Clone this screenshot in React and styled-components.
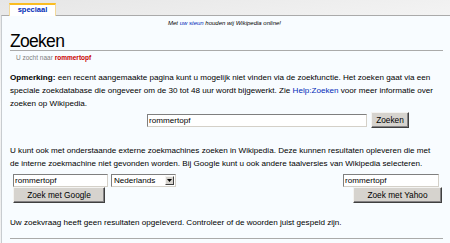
import styled, { createGlobalStyle } from 'styled-components';

const GlobalStyle = createGlobalStyle`
  html, body {
    margin: 0;
    padding: 0;
    width: 450px;
    height: 243px;
    overflow: hidden;
    background: #f2f2f2;
  }
  body {
    font-family: "Liberation Sans", Arial, sans-serif;
  }
`;

export default function App() {
  return (
    <>
      <GlobalStyle />
      <Page>
        <TopBar>
          <Tab>speciaal</Tab>
        </TopBar>
        <Content>
          <SiteNotice>
            Met <Link>uw steun</Link> houden wij Wikipedia online!
          </SiteNotice>
          <Heading>Zoeken</Heading>
          <SubTitle>
            U zocht naar <Query>rommertopf</Query>
          </SubTitle>
          <Paragraph>
            <b>Opmerking:</b> een recent aangemaakte pagina kunt u mogelijk niet vinden via de zoekfunctie. Het zoeken gaat via een
            <br />
            speciale zoekdatabase die ongeveer om de 30 tot 48 uur wordt bijgewerkt. Zie <Link>Help:Zoeken</Link> voor meer informatie over
            <br />
            zoeken op Wikipedia.
          </Paragraph>
          <SearchRow>
            <TextInput $width={220} $top={2} defaultValue="rommertopf" />
            <Button $width={38}>Zoeken</Button>
          </SearchRow>
          <Paragraph $top={16}>
            U kunt ook met onderstaande externe zoekmachines zoeken in Wikipedia. Deze kunnen resultaten opleveren die met
            <br />
            de interne zoekmachine niet gevonden worden. Bij Google kunt u ook andere taalversies van Wikipedia selecteren.
          </Paragraph>
          <ExternalRow>
            <Engine>
              <Inline>
                <TextInput $width={95} defaultValue="rommertopf" />
                <Select>
                  <span>Nederlands</span>
                  <Arrow>
                    <svg width="5" height="3" viewBox="0 0 5 3">
                      <path d="M0 0h5L2.5 3z" fill="#000" />
                    </svg>
                  </Arrow>
                </Select>
              </Inline>
              <Button $width={92}>Zoek met Google</Button>
            </Engine>
            <Engine $right>
              <TextInput $width={96} $offset={3} defaultValue="rommertopf" />
              <Button $width={89}>Zoek met Yahoo</Button>
            </Engine>
          </ExternalRow>
          <Paragraph $top={13}>
            Uw zoekvraag heeft geen resultaten opgeleverd. Controleer of de woorden juist gespeld zijn.
          </Paragraph>
          <Rule />
        </Content>
      </Page>
    </>
  );
}

const Page = styled.div`
  width: 450px;
  height: 243px;
  overflow: hidden;
  background: linear-gradient(172deg, #e6e6e6 0%, #f8f8f8 35%, #ebebeb 55%, #f9f9f9 100%);
`;

const TopBar = styled.div`
  height: 15px;
  padding-left: 9px;
  display: flex;
  align-items: flex-end;
  position: relative;
  z-index: 1;
`;

const Tab = styled.div`
  box-sizing: border-box;
  width: 47px;
  height: 13px;
  margin-bottom: -1px;
  background: #fff;
  border-top: 2px solid #fabd23;
  border-left: 1px solid #f3d99a;
  border-right: 1px solid #f3d99a;
  color: #002bb8;
  font-size: 7.5px;
  font-weight: bold;
  text-align: center;
  line-height: 10px;
`;

const Content = styled.div`
  margin-left: 1px;
  height: 228px;
  background: #f8fcff;
  border-top: 1px solid #aaa;
  border-left: 1px solid #c8ccd0;
  padding: 0 7px 0 8px;
  color: #000;
`;

const SiteNotice = styled.div`
  text-align: center;
  font-size: 6px;
  font-style: italic;
  padding: 3px 4px 0 0;
  line-height: 8px;
`;

const Link = styled.span`
  color: #002bb8;
`;

const Heading = styled.h1`
  margin: 5px 0 0;
  font-weight: normal;
  font-size: 17.5px;
  letter-spacing: -0.7px;
  line-height: 18px;
  border-bottom: 1px solid #aaa;
  padding-bottom: 0;
`;

const SubTitle = styled.div`
  font-size: 6.5px;
  color: #7d7d7d;
  margin: 2px 0 0 6px;
  line-height: 9px;
`;

const Query = styled.b`
  color: #c80000;
`;

const Paragraph = styled.p`
  margin: ${(p) => p.$top ?? 9}px 0 0;
  font-size: 8.1px;
  line-height: 13px;
`;

const SearchRow = styled.div`
  display: flex;
  gap: 4px;
  margin: 2px 0 0 137px;
  align-items: flex-start;
`;

const TextInput = styled.input`
  box-sizing: border-box;
  flex: none;
  width: ${(p) => p.$width}px;
  height: 13px;
  margin: ${(p) => p.$top ?? 0}px ${(p) => p.$offset ?? 0}px 0 0;
  padding: 0 1px;
  border: 1px solid #7f7f7f;
  border-right-color: #d4d0c8;
  border-bottom-color: #d4d0c8;
  background: #fff;
  font-family: inherit;
  font-size: 8.1px;
  outline: none;
`;

const Button = styled.div`
  box-sizing: border-box;
  flex: none;
  width: ${(p) => p.$width}px;
  height: 16px;
  background: #d6d3ce;
  border: 1px solid #f4f3f1;
  border-right-color: #404040;
  border-bottom-color: #404040;
  box-shadow: inset -1px -1px 0 #848284;
  font-size: 8.3px;
  line-height: 14px;
  text-align: center;
  white-space: nowrap;
  color: #000;
`;

const ExternalRow = styled.div`
  display: flex;
  justify-content: space-between;
  margin-top: 4px;
  padding: 0 1px 0 3px;
`;

const Engine = styled.div`
  display: flex;
  flex-direction: column;
  align-items: ${(p) => (p.$right ? 'flex-end' : 'flex-start')};
`;

const Inline = styled.div`
  display: flex;
  gap: 3px;
`;

const Select = styled.div`
  box-sizing: border-box;
  width: 65px;
  height: 13px;
  display: flex;
  align-items: center;
  justify-content: space-between;
  border: 1px solid #7f7f7f;
  border-right-color: #d4d0c8;
  border-bottom-color: #d4d0c8;
  background: #fff;
  font-size: 8.1px;
  padding-left: 2px;
`;

const Arrow = styled.div`
  width: 9px;
  height: 9px;
  margin-right: 1px;
  background: #d6d3ce;
  border: 1px solid #f4f3f1;
  border-right-color: #404040;
  border-bottom-color: #404040;
  box-sizing: border-box;
  display: flex;
  align-items: center;
  justify-content: center;
`;

const Rule = styled.div`
  margin-top: 9px;
  border-top: 1px solid #aaa;
  height: 0;
`;
